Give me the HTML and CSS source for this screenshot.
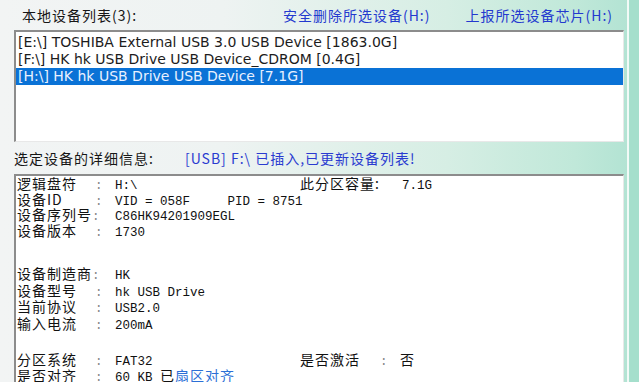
FILE: index.html
```html
<!DOCTYPE html>
<html lang="zh-CN">
<head>
  <meta charset="UTF-8" />
  <title>本地设备列表</title>
  <link rel="stylesheet" href="styles.css">
</head>
<body>
  <div class="window">
    <div class="main">
      <div class="toolbar">
        <span class="caption">本地设备列表(3):</span>
        <a class="action first" href="#">安全删除所选设备(H:)</a>
        <a class="action" href="#">上报所选设备芯片(H:)</a>
      </div>

      <div class="listbox">
        <div class="row">[E:\] TOSHIBA External USB 3.0 USB Device [1863.0G]</div>
        <div class="row">[F:\] HK hk USB Drive USB Device_CDROM [0.4G]</div>
        <div class="row selected">[H:\] HK hk USB Drive USB Device [7.1G]</div>
      </div>

      <div class="detail-head">
        <span class="caption">选定设备的详细信息:</span>
        <span class="status">[USB] F:\ 已插入,已更新设备列表!</span>
      </div>

      <div class="detailbox">
        <div class="group g1">
          <div class="line"><span class="k">逻辑盘符</span><span class="c">:</span><span class="v">H:\</span><span class="k2 wide">此分区容量:</span><span class="v2">7.1G</span></div>
          <div class="line"><span class="k">设备ID</span><span class="c">:</span><span class="v">VID = 058F     PID = 8751</span></div>
          <div class="line"><span class="k">设备序列号</span><span class="c c0">:</span><span class="v">C86HK94201909EGL</span></div>
          <div class="line"><span class="k">设备版本</span><span class="c">:</span><span class="v">1730</span></div>
        </div>
        <div class="group g2">
          <div class="line"><span class="k">设备制造商</span><span class="c c0">:</span><span class="v">HK</span></div>
          <div class="line"><span class="k">设备型号</span><span class="c">:</span><span class="v">hk USB Drive</span></div>
          <div class="line"><span class="k">当前协议</span><span class="c">:</span><span class="v">USB2.0</span></div>
          <div class="line"><span class="k">输入电流</span><span class="c">:</span><span class="v">200mA</span></div>
        </div>
        <div class="group g3">
          <div class="line"><span class="k">分区系统</span><span class="c">:</span><span class="v">FAT32</span><span class="k2">是否激活</span><span class="c">:</span><span class="cjk">否</span></div>
          <div class="line"><span class="k">是否对齐</span><span class="c">:</span><span class="v">60 KB <span class="cjk">已</span><a class="cjk link" href="#">扇区对齐</a></span></div>
        </div>
      </div>
    </div>
    <div class="edge"></div>
  </div>
</body>
</html>
```

FILE: styles.css
```css
html, body {
  margin: 0;
  padding: 0;
}

body {
  width: 639px;
  height: 382px;
  overflow: hidden;
  font-family: "Noto Sans CJK SC", "Liberation Sans", sans-serif;
  color: #111;
}

.window {
  display: flex;
  height: 382px;
  background: linear-gradient(90deg, #f2f4f4 0%, #eef3f2 35%, #d6eee4 70%, #c0e8d9 90%, #b0e2d2 100%);
}

.main {
  width: 612px;
  padding-left: 14px;
}

.edge {
  width: 10px;
  margin-left: 3px;
  border-left: 2px solid #f2faf7;
  background-color: #a5dfcc;
}

.toolbar {
  display: flex;
  align-items: center;
  height: 30px;
  font-size: 14px;
  letter-spacing: 1px;
  padding-left: 8px;
}

.caption {
  color: #161616;
}

.action {
  color: #2339cf;
  text-decoration: none;
}

.action.first {
  margin-left: auto;
  margin-right: 35px;
}

.action:last-child {
  margin-right: 11px;
}

.listbox {
  height: 107px;
  background-color: #fff;
  border-top: 2px solid #8c8c8c;
  border-left: 2px solid #8c8c8c;
  border-right: 1px solid #e8e8e8;
  border-bottom: 1px solid #e8e8e8;
  padding-top: 2px;
  font-family: "DejaVu Sans", Tahoma, sans-serif;
  font-size: 14px;
}

.row {
  height: 17px;
  line-height: 17px;
  padding-left: 2px;
  color: #1c1c1c;
  white-space: nowrap;
}

.row.selected {
  background-color: #0a72d6;
  color: #e8f0ff;
}

.detail-head {
  display: flex;
  align-items: center;
  height: 32px;
  font-size: 14px;
  letter-spacing: 1px;
}

.status {
  margin-left: 31px;
  color: #2a3bd0;
}

.detailbox {
  height: 220px;
  background-color: #fff;
  border-top: 2px solid #8c8c8c;
  border-left: 2px solid #8c8c8c;
  border-right: 1px solid #e8e8e8;
  padding-left: 1px;
}

.group.g1 .line { height: 15.5px; }
.group.g2 { margin-top: 28px; }
.group.g2 .line { height: 16.6px; }
.group.g3 { margin-top: 20px; }
.group.g3 .line { height: 16px; }

.line {
  display: flex;
  align-items: baseline;
  line-height: 15px;
  white-space: pre;
}

.k, .k2, .cjk {
  font-family: "Noto Sans CJK SC", sans-serif;
  font-size: 14px;
  letter-spacing: 1px;
  color: #111;
}

.k {
  width: 78px;
}

.k2 {
  width: 80px;
}

.k2.wide {
  width: 102px;
}

.c {
  width: 20px;
  font-family: "Liberation Mono", monospace;
  font-size: 12.5px;
  color: #888;
}

.c.c0 {
  margin-left: -3px;
  width: 23px;
}

.v, .v2 {
  font-family: "Liberation Mono", monospace;
  font-size: 12.5px;
  color: #111;
}

.v {
  width: 185px;
}

.link {
  color: #2b6fd6;
  text-decoration: underline;
}
```
